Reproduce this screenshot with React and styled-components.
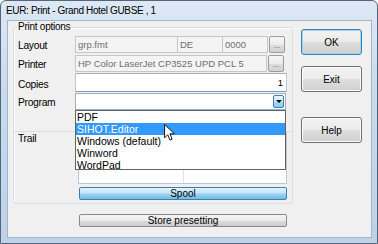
import React from 'react';
import styled, { createGlobalStyle } from 'styled-components';

const GlobalStyle = createGlobalStyle`
  html, body { margin: 0; padding: 0; background: #fff; }
  body { font-family: "Liberation Sans", Arial, sans-serif; }
  * { box-sizing: border-box; }
`;

const Window = styled.div`
  width: 378px;
  height: 244px;
  display: flex;
  flex-direction: column;
  background: linear-gradient(180deg, #dde8f5 0%, #cadbee 35%, #bdd1e8 100%);
  border: 1px solid #56667a;
  border-radius: 6px 6px 0 0;
  overflow: hidden;
`;

const TitleBar = styled.div`
  height: 19px;
  flex: none;
  padding-left: 5px;
  display: flex;
  align-items: center;
  font-size: 10px;
  letter-spacing: -0.35px;
  color: #000;
`;

const Client = styled.div`
  flex: 1;
  margin: 0 5px 5px 6px;
  display: flex;
  background: #f0f0f0;
  border: 1px solid #a3b5ca;
`;

const LeftCol = styled.div`
  padding-left: 5px;
  display: flex;
  flex-direction: column;
`;

const GroupBox = styled.fieldset`
  width: 280px;
  margin: 0;
  padding: 3px 5px 3px 4px;
  border: 1px solid #d5dfe5;
  border-radius: 3px;
  box-shadow: inset 1px 1px 0 #fff;
`;

const Legend = styled.legend`
  padding: 0 1px;
  margin-left: -1px;
  font-size: 10px;
  line-height: 12px;
  letter-spacing: -0.25px;
  color: #000;
`;

const Row = styled.div`
  display: flex;
  align-items: flex-start;
  height: ${p => p.$h}px;
  margin-top: ${p => p.$mt || 0}px;
`;

const Label = styled.div`
  width: 57px;
  flex: none;
  padding-top: ${p => p.$pt}px;
  font-size: 10.3px;
  line-height: 12px;
  letter-spacing: -0.3px;
  color: #000;
`;

const ReadField = styled.div`
  width: ${p => p.$w}px;
  height: 100%;
  margin-left: ${p => p.$ml || 0}px;
  padding-left: 2px;
  display: flex;
  align-items: center;
  background: #f4f4f4;
  border: 1px solid #c6c6c6;
  font-size: 9.5px;
  color: #6f6f6f;
  white-space: nowrap;
  overflow: hidden;
`;

const EditField = styled.div`
  width: ${p => p.$w}px;
  height: 100%;
  padding-right: 3px;
  display: flex;
  align-items: center;
  justify-content: flex-end;
  background: #fff;
  border: 1px solid #c2c7cd;
  border-top-color: #abadb3;
  border-bottom-color: #6f9ccb;
  font-size: 9.5px;
  color: #000;
`;

const DotsButton = styled.div`
  width: 16px;
  height: 100%;
  margin-left: 1px;
  display: flex;
  align-items: flex-end;
  justify-content: center;
  padding-bottom: 3px;
  border: 1px solid #9c9c9c;
  border-radius: 2px;
  background: linear-gradient(180deg, #f6f6f6 0%, #ececec 50%, #dedede 51%, #d2d2d2 100%);
  font-size: 8px;
  line-height: 6px;
  color: #555;
`;

const ComboWrap = styled.div`
  position: relative;
  width: 211px;
  height: 100%;
`;

const Combo = styled.div`
  height: 100%;
  display: flex;
  justify-content: flex-end;
  padding: 1px;
  background: #fff;
  border: 1px solid #abadb3;
  border-bottom-color: #8fb3d6;
`;

const DropButton = styled.div`
  width: 11px;
  display: flex;
  align-items: center;
  justify-content: center;
  border: 1px solid #3c7fb1;
  border-radius: 2px;
  background: linear-gradient(180deg, #eaf6fd 0%, #c9e8fa 50%, #a8d8f3 51%, #8ccaee 100%);
`;

const Arrow = styled.div`
  width: 0;
  height: 0;
  border-left: 3px solid transparent;
  border-right: 3px solid transparent;
  border-top: 3px solid #000;
`;

const List = styled.div`
  position: absolute;
  top: 100%;
  left: 0;
  width: 211px;
  height: 60px;
  z-index: 2;
  background: #fff;
  border: 1px solid #646464;
`;

const Item = styled.div`
  height: 12px;
  line-height: 12px;
  padding-left: 1px;
  font-size: 10.5px;
  color: ${p => (p.$active ? '#fff' : '#000')};
  background: ${p => (p.$active ? '#3399ff' : 'transparent')};
`;

const Cursor = styled.svg`
  position: absolute;
  left: 88px;
  top: 13px;
`;

const Separator = styled.div`
  height: 1px;
  margin: 21px -5px 0 -4px;
  background: #d5dfe5;
`;

const TrailBox = styled.div`
  width: 209px;
  height: 52px;
  margin-left: 3px;
  display: grid;
  grid-template-columns: 105px 1fr;
  background: #fff;
  border: 1px solid #c2c7cd;
`;

const TrailCell = styled.div`
  border-right: ${p => (p.$divider ? '1px solid #e2e2e2' : 'none')};
`;

const WideButton = styled.div`
  width: 208px;
  height: ${p => p.$h}px;
  margin: ${p => p.$mt}px 0 0 ${p => p.$ml}px;
  display: flex;
  align-items: center;
  justify-content: center;
  border: 1px solid ${p => (p.$hot ? '#3c7fb1' : '#8a8a8a')};
  border-radius: 2px;
  background: ${p => (p.$hot
    ? 'linear-gradient(180deg, #e3f3fc 0%, #bfe3f8 45%, #9fd3f1 55%, #6fbbe6 100%)'
    : 'linear-gradient(180deg, #f4f4f4 0%, #ebebeb 50%, #dcdcdc 51%, #cdcdcd 100%)')};
  font-size: 10px;
  line-height: 10px;
  color: #000;
`;

const RightCol = styled.div`
  margin-left: 8px;
  padding-top: 8px;
  display: flex;
  flex-direction: column;
`;

const DialogButton = styled.div`
  width: 61px;
  height: 26px;
  margin-top: ${p => p.$mt || 0}px;
  display: flex;
  align-items: center;
  justify-content: center;
  border: 1px solid ${p => (p.$default ? '#3c7fb1' : '#707070')};
  border-radius: 3px;
  box-shadow: ${p => (p.$default ? 'inset 0 0 0 1px #9bd6f5' : 'inset 0 0 0 1px #fcfcfc')};
  background: linear-gradient(180deg, #f3f3f3 0%, #ebebeb 50%, #dedede 51%, #d0d0d0 100%);
  font-size: 10px;
  color: #000;
`;

const programs = ['PDF', 'SIHOT.Editor', 'Windows (default)', 'Winword', 'WordPad'];

export default function App() {
  return (
    <>
      <GlobalStyle />
      <Window>
        <TitleBar>EUR: Print - Grand Hotel GUBSE , 1</TitleBar>
        <Client>
          <LeftCol>
            <GroupBox>
              <Legend>Print options</Legend>
              <Row $h={17}>
                <Label $pt={4}>Layout</Label>
                <ReadField $w={103}>grp.fmt</ReadField>
                <ReadField $w={46} $ml={-1}>DE</ReadField>
                <ReadField $w={46} $ml={-1}>0000</ReadField>
                <DotsButton>...</DotsButton>
              </Row>
              <Row $h={17} $mt={2}>
                <Label $pt={4}>Printer</Label>
                <ReadField $w={192}>HP Color LaserJet CP3525 UPD PCL 5</ReadField>
                <DotsButton>...</DotsButton>
              </Row>
              <Row $h={19} $mt={1}>
                <Label $pt={6}>Copies</Label>
                <EditField $w={212}>1</EditField>
              </Row>
              <Row $h={17} $mt={1}>
                <Label $pt={4}>Program</Label>
                <ComboWrap>
                  <Combo>
                    <DropButton><Arrow /></DropButton>
                  </Combo>
                  <List>
                    {programs.map(p => (
                      <Item key={p} $active={p === 'SIHOT.Editor'}>{p}</Item>
                    ))}
                    <Cursor width="11" height="17" viewBox="0 0 12 19">
                      <path d="M0.5 0.5 L0.5 15.5 L4 12 L6.5 18 L9 17 L6.5 11 L11.5 11 Z" fill="#fff" stroke="#000" strokeWidth="1" strokeLinejoin="round" />
                    </Cursor>
                  </List>
                </ComboWrap>
              </Row>
              <Separator />
              <Row $h={52}>
                <Label $pt={1}>Trail</Label>
                <TrailBox>
                  <TrailCell $divider />
                  <TrailCell />
                </TrailBox>
              </Row>
              <WideButton $hot $h={13} $mt={3} $ml={61}>Spool</WideButton>
            </GroupBox>
            <WideButton $h={13} $mt={10} $ml={66}>Store presetting</WideButton>
          </LeftCol>
          <RightCol>
            <DialogButton $default>OK</DialogButton>
            <DialogButton $mt={11}>Exit</DialogButton>
            <DialogButton $mt={25}>Help</DialogButton>
          </RightCol>
        </Client>
      </Window>
    </>
  );
}
